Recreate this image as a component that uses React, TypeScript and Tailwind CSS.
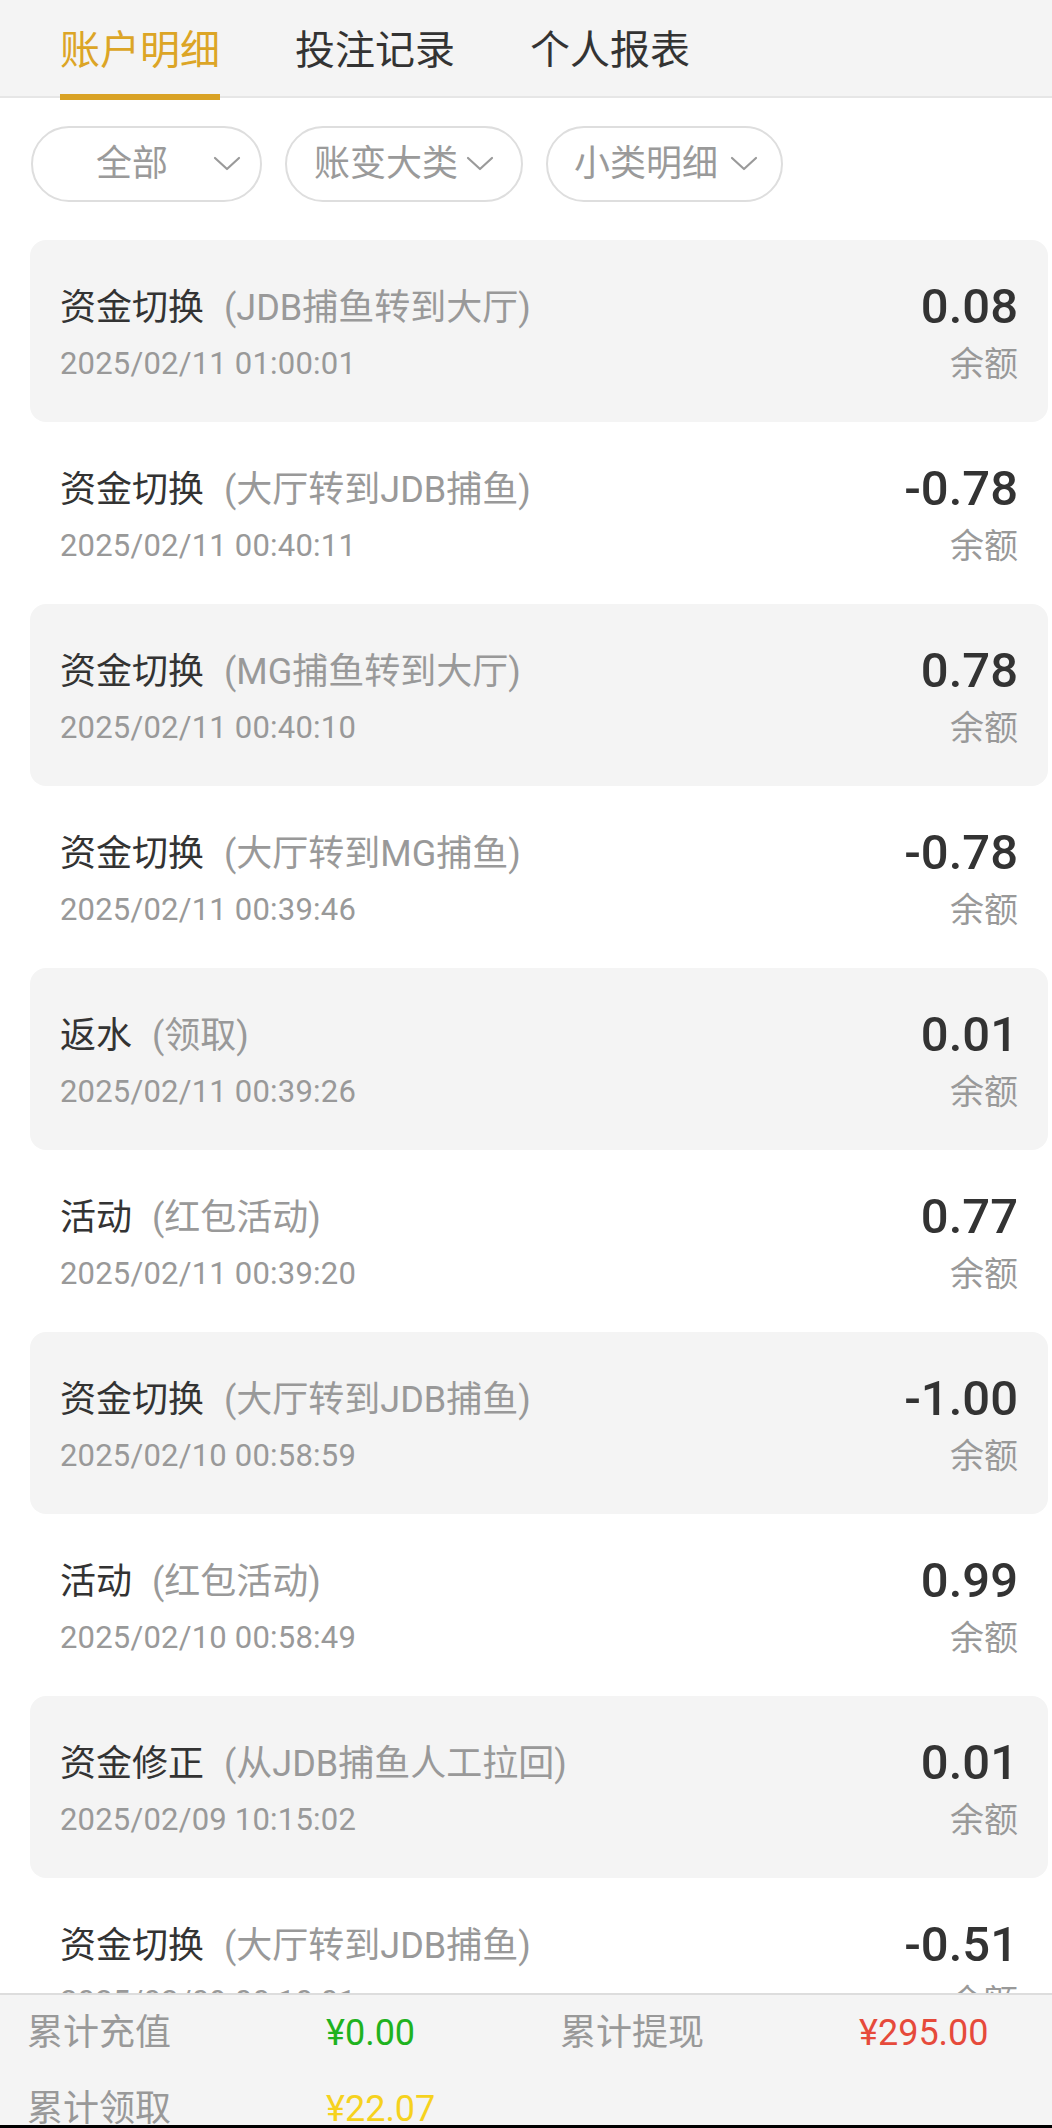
import React from 'react';

type Record = {
  title: string;
  detail: string;
  time: string;
  amount: string;
};

const records: Record[] = [
  { title: '资金切换', detail: '(JDB捕鱼转到大厅)', time: '2025/02/11 01:00:01', amount: '0.08' },
  { title: '资金切换', detail: '(大厅转到JDB捕鱼)', time: '2025/02/11 00:40:11', amount: '-0.78' },
  { title: '资金切换', detail: '(MG捕鱼转到大厅)', time: '2025/02/11 00:40:10', amount: '0.78' },
  { title: '资金切换', detail: '(大厅转到MG捕鱼)', time: '2025/02/11 00:39:46', amount: '-0.78' },
  { title: '返水', detail: '(领取)', time: '2025/02/11 00:39:26', amount: '0.01' },
  { title: '活动', detail: '(红包活动)', time: '2025/02/11 00:39:20', amount: '0.77' },
  { title: '资金切换', detail: '(大厅转到JDB捕鱼)', time: '2025/02/10 00:58:59', amount: '-1.00' },
  { title: '活动', detail: '(红包活动)', time: '2025/02/10 00:58:49', amount: '0.99' },
  { title: '资金修正', detail: '(从JDB捕鱼人工拉回)', time: '2025/02/09 10:15:02', amount: '0.01' },
  { title: '资金切换', detail: '(大厅转到JDB捕鱼)', time: '2025/02/09 00:10:01', amount: '-0.51' },
];

const tabs = ['账户明细', '投注记录', '个人报表'];

const Chevron: React.FC = () => (
  <svg width="28" height="16" viewBox="0 0 28 16" fill="none" className="shrink-0">
    <polyline points="2,2 14,13 26,2" stroke="#9a9a9a" strokeWidth="2.2" strokeLinecap="round" strokeLinejoin="round" />
  </svg>
);

const App: React.FC = () => {
  return (
    <div
      className="h-[2128px] w-[1052px] flex flex-col overflow-hidden bg-white"
      style={{ fontFamily: 'Roboto, "Noto Sans CJK SC", sans-serif' }}
    >
      {/* Tabs */}
      <div className="h-[98px] shrink-0 bg-[#f4f4f4] border-b-2 border-[#e6e6e6] flex pl-[60px] gap-[75px]">
        {tabs.map((tab, i) => (
          <div key={tab} className="relative h-full flex items-center pt-[5px]">
            <span className={`text-[40px] leading-[48px] ${i === 0 ? 'text-[#dca526]' : 'text-[#333333]'}`}>{tab}</span>
            {i === 0 && <div className="absolute left-0 right-0 bottom-[-4px] h-[6px] bg-[#d9a224]" />}
          </div>
        ))}
      </div>

      {/* Filters */}
      <div className="shrink-0 flex gap-[23px] pl-[31px] pt-[28px]">
        <div className="h-[76px] w-[231px] rounded-full border-2 border-[#dedede] bg-white flex items-center pl-[26px]">
          <span className="w-[146px] text-center text-[36px] leading-[44px] text-[#9a9a9a]">全部</span>
          <span className="ml-[8px] flex items-center">
            <Chevron />
          </span>
        </div>
        <div className="h-[76px] w-[238px] rounded-full border-2 border-[#dedede] bg-white flex items-center pl-[27px]">
          <span className="text-[36px] leading-[44px] text-[#9a9a9a]">账变大类</span>
          <span className="ml-[8px] flex items-center">
            <Chevron />
          </span>
        </div>
        <div className="h-[76px] w-[237px] rounded-full border-2 border-[#dedede] bg-white flex items-center pl-[26px]">
          <span className="text-[36px] leading-[44px] text-[#9a9a9a]">小类明细</span>
          <span className="ml-[12px] flex items-center">
            <Chevron />
          </span>
        </div>
      </div>

      {/* Records */}
      <div className="flex-1 overflow-hidden mt-[38px]">
        {records.map((r, i) => (
          <div
            key={i}
            className={`h-[182px] ml-[30px] mr-[4px] rounded-[16px] flex justify-between px-[30px] ${
              i % 2 === 0 ? 'bg-[#f4f4f4]' : 'bg-white'
            }`}
          >
            <div className="pt-[46px]">
              <div className="flex items-center text-[36px] leading-[44px]">
                <span className="text-[#333333]">{r.title}</span>
                <span className="ml-[20px] text-[#999999]">{r.detail}</span>
              </div>
              <div className="mt-[14px] text-[31px] leading-[40px] text-[#999999] tracking-[0.2px]">{r.time}</div>
            </div>
            <div className="pt-[39px] flex flex-col items-end">
              <div className="text-[49px] leading-[56px] font-medium text-[#333333]">{r.amount}</div>
              <div className="mt-[9px] text-[34px] leading-[40px] text-[#999999]">余额</div>
            </div>
          </div>
        ))}
      </div>

      {/* Summary footer */}
      <div className="h-[132px] shrink-0 bg-[#f4f4f4] border-t-2 border-[#dddddd] overflow-hidden pl-[27px]">
        <div className="grid grid-cols-[299px_234px_299px_1fr] text-[36px]">
          <div className="h-[76px] flex items-center text-[#999999]">累计充值</div>
          <div className="h-[76px] flex items-center text-[#1fb21f]">¥0.00</div>
          <div className="h-[76px] flex items-center text-[#999999]">累计提现</div>
          <div className="h-[76px] flex items-center text-[#e64a3b]">¥295.00</div>
          <div className="h-[76px] flex items-center text-[#999999]">累计领取</div>
          <div className="h-[76px] flex items-center text-[#f6d21e]">¥22.07</div>
        </div>
      </div>
      <div className="h-[3px] shrink-0 bg-black" />
    </div>
  );
};

export default App;
